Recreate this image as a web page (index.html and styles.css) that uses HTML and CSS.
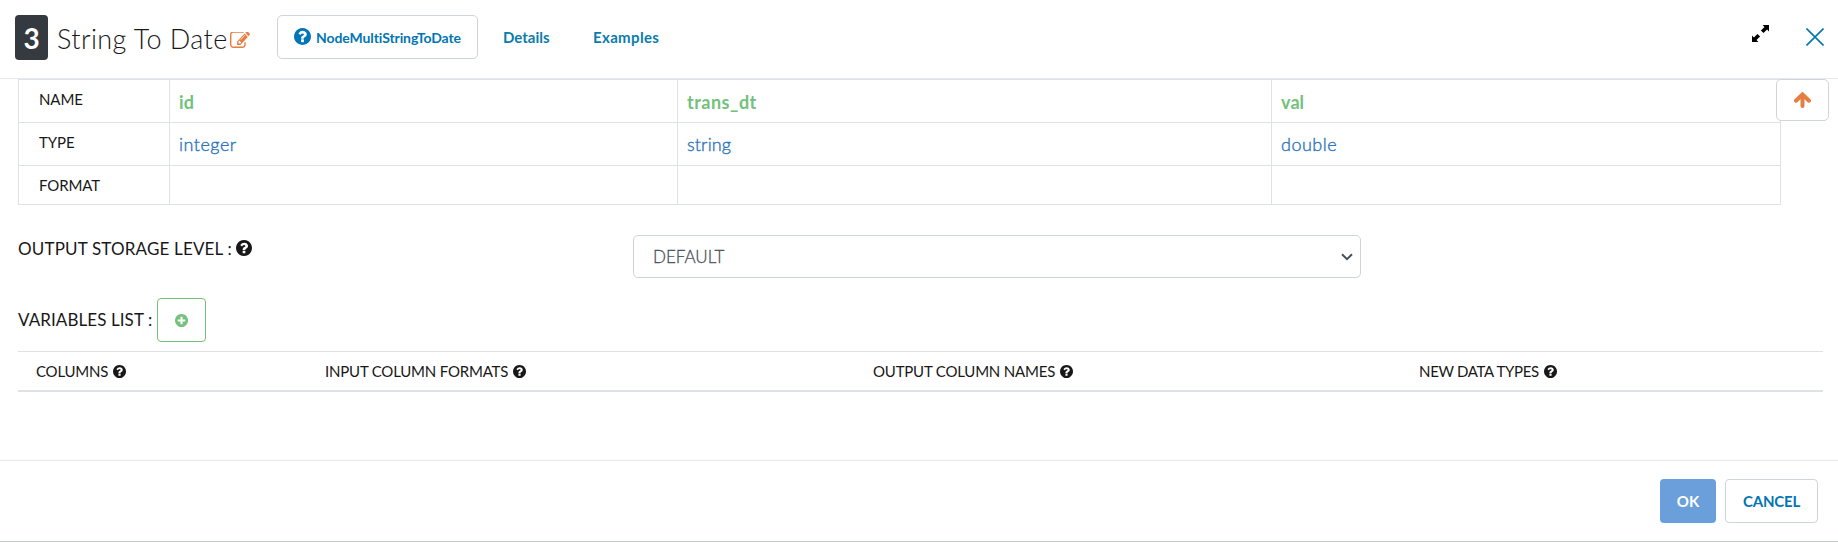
FILE: index.html
```
<!DOCTYPE html>
<html lang="en">
<head>
<meta charset="utf-8">
<title>String To Date</title>
<link rel="stylesheet" href="styles.css">
</head>
<body>
<svg class="defs" width="0" height="0">
  <symbol id="help" viewBox="128 128 1536 1536"><path d="M1024 1376v-192q0-14-9-23t-23-9h-192q-14 0-23 9t-9 23v192q0 14 9 23t23 9h192q14 0 23-9t9-23zm256-672q0-88-55.500-163t-138.500-116-170-41q-243 0-371 213-15 24 8 42l132 100q7 6 19 6 16 0 25-12 53-68 86-92 34-24 86-24 48 0 85.500 26t37.500 59q0 38-20 61t-68 45q-63 28-115.500 86.500t-52.500 125.500v36q0 14 9 23t23 9h192q14 0 23-9t9-23q0-19 21.500-49.500t54.500-49.500q32-18 49-28.500t46-35 44.500-48 28-60.500 12.500-81zm384 192q0 209-103 385.500t-279.500 279.500-385.500 103-385.500-103-279.500-279.500-103-385.500 103-385.500 279.500-279.500 385.500-103 385.500 103 279.500 279.500 103 385.500z"/></symbol>
</svg>
<header class="header">
  <span class="badge">3</span>
  <h1 class="title">String To Date</h1>
  <svg class="edit" viewBox="0 190 1792 1350" preserveAspectRatio="none"><path d="M888 1184l116-116-152-152-116 116v56h96v96h56zm440-720q-16-16-33 1l-350 350q-17 17-1 33t33-1l350-350q17-17 1-33zm80 594v190q0 119-84.500 203.500t-203.500 84.500h-832q-119 0-203.500-84.500t-84.500-203.500v-832q0-119 84.500-203.500t203.500-84.500h832q63 0 117 25 15 7 18 23 3 17-9 29l-49 49q-14 14-32 8-23-6-45-6h-832q-66 0-113 47t-47 113v832q0 66 47 113t113 47h832q66 0 113-47t47-113v-126q0-13 9-22l64-64q15-15 35-7t20 29zm-96-738l288 288-672 672h-288v-288zm444 132l-92 92-288-288 92-92q28-28 68-28t68 28l152 152q28 28 28 68t-28 68z"/></svg>
  <a class="node-btn"><svg class="help-lg"><use href="#help"/></svg><span>NodeMultiStringToDate</span></a>
  <a class="link details">Details</a>
  <a class="link examples">Examples</a>
  <svg class="expand" viewBox="0 0 17 17"><path d="M10.600 0H17v6.400l-1.900-1.900-3.600 3.600-2.600-2.600 3.600-3.600zM6.400 17H0v-6.400l1.900 1.900 3.600-3.600 2.600 2.600-3.600 3.600z"/></svg>
  <svg class="close" viewBox="0 0 18 18"><path d="M.5.500l17 17M17.500.500l-17 17"/></svg>
</header>
<main class="body">
  <div class="schema-wrap">
    <div class="schema">
      <div class="label">NAME</div><div class="col">id</div><div class="col trans">trans_dt</div><div class="col">val</div>
      <div class="label">TYPE</div><div class="kind">integer</div><div class="kind string">string</div><div class="kind">double</div>
      <div class="label">FORMAT</div><div></div><div></div><div></div>
    </div>
    <button class="up"><svg viewBox="0 0 17 16"><path d="M2 8.700L8.500 2.400L15 8.700M8.500 3V14"/></svg></button>
  </div>
  <div class="storage">
    <div class="field-label out"><span>OUTPUT STORAGE LEVEL :</span><svg class="help-md"><use href="#help"/></svg></div>
    <div class="select"><span>DEFAULT</span><svg viewBox="0 0 12 8"><path d="M1 1.200l5 5 5-5"/></svg></div>
  </div>
  <div class="variables">
    <div class="field-label vars">VARIABLES LIST :</div>
    <button class="add"><svg viewBox="128 128 1536 1536"><path d="M1344 960v-128q0-26-19-45t-45-19h-256v-256q0-26-19-45t-45-19h-128q-26 0-45 19t-19 45v256h-256q-26 0-45 19t-19 45v128q0 26 19 45t45 19h256v256q0 26 19 45t45 19h128q26 0 45-19t19-45v-256h256q26 0 45-19t19-45zm320-64q0 209-103 385.500t-279.500 279.500-385.500 103-385.500-103-279.500-279.500-103-385.500 103-385.500 279.500-279.500 385.500-103 385.500 103 279.500 279.500 103 385.500z"/></svg></button>
  </div>
  <div class="grid-head">
    <div class="th"><span>COLUMNS</span><svg class="help-sm"><use href="#help"/></svg></div>
    <div class="th"><span>INPUT COLUMN FORMATS</span><svg class="help-sm"><use href="#help"/></svg></div>
    <div class="th"><span>OUTPUT COLUMN NAMES</span><svg class="help-sm"><use href="#help"/></svg></div>
    <div class="th types"><span>NEW DATA TYPES</span><svg class="help-sm"><use href="#help"/></svg></div>
  </div>
</main>
<footer class="footer">
  <button class="btn ok">OK</button>
  <button class="btn cancel">CANCEL</button>
</footer>
</body>
</html>
```
FILE: styles.css
```
* { box-sizing: border-box; }
body {
  margin: 0;
  height: 542px;
  display: flex;
  flex-direction: column;
  overflow: hidden;
  background: #fff;
  color: #181818;
  font-family: Lato, "Open Sans", sans-serif;
  border-bottom: 1px solid #c6c8ca;
}
.defs { position: absolute; }
svg { display: block; flex: none; fill: currentColor; }
span { white-space: nowrap; }
button { background: #fff; font-family: inherit; padding: 0; }

.header {
  flex: none;
  height: 79px;
  display: flex;
  align-items: flex-start;
  padding-left: 15px;
  border-bottom: 1px solid #e5e8ec;
}
.badge {
  width: 33px;
  height: 45px;
  margin-top: 15px;
  border-radius: 4px;
  background: #343a40;
  color: #fff;
  font-size: 28px;
  font-weight: 700;
  line-height: 46px;
  text-align: center;
}
.title {
  width: 173px;
  margin: 21px 0 0 9px;
  font-size: 27px;
  font-weight: 300;
  line-height: 35px;
  letter-spacing: 0.42px;
  white-space: nowrap;
}
.edit { width: 20px; height: 16px; margin-top: 32px; color: #e67e43; }
.node-btn {
  display: flex;
  width: 201px;
  height: 44px;
  margin: 15px 0 0 27px;
  padding-left: 16px;
  border: 1px solid #ced4da;
  border-radius: 5px;
  color: #0275b4;
  font-size: 14px;
  font-weight: 700;
  line-height: 44px;
  letter-spacing: -0.1px;
}
.help-lg { width: 17px; height: 17px; margin: 12px 5px 0 0; }
.link { color: #0a7cab; font-size: 15px; font-weight: 700; line-height: 20px; margin-top: 27px; }
.details { width: 64px; margin-left: 25px; }
.examples { width: 68px; margin-left: 26px; letter-spacing: 0.35px; }
.expand { width: 17px; height: 17px; margin: 25px 0 0 auto; color: #000; }
.close { width: 18px; height: 18px; margin: 28px 14px 0 37px; stroke: #0078ad; stroke-width: 1.6; }

.body { flex: 1; padding-left: 18px; min-height: 0; }
.schema-wrap { display: flex; position: relative; height: 126px; }
.schema {
  display: grid;
  grid-template-columns: 151px 508px 594px 509px;
  grid-template-rows: 43px 43px 39px;
  width: 1763px;
  border-top: 1px solid #dee2e6;
  border-left: 1px solid #dee2e6;
}
.schema > div {
  border-right: 1px solid #dee2e6;
  border-bottom: 1px solid #dee2e6;
  padding-left: 9px;
}
.schema > .label { padding-left: 20px; font-size: 15px; line-height: 39px; letter-spacing: -0.1px; }
.col { color: #73c17b; font-size: 18px; font-weight: 700; line-height: 44px; letter-spacing: 0.1px; }
.trans { letter-spacing: 0.5px; }
.kind { color: #2f75bd; font-size: 18px; font-weight: 300; line-height: 43px; letter-spacing: 0.5px; -webkit-text-stroke: 0.4px; }
.string { letter-spacing: 0.15px; }
.up {
  position: absolute;
  left: 1758px;
  top: 0;
  width: 53px;
  height: 42px;
  border: 1px solid #ced4da;
  border-radius: 5px;
  color: #e67e43;
}
.up svg { width: 17px; height: 16px; margin: 0 auto; fill: none; stroke: currentColor; stroke-width: 4; stroke-linecap: round; }

.storage { display: flex; padding-top: 30px; height: 93px; }
.field-label { display: flex; font-size: 17px; line-height: 28px; letter-spacing: 0.08px; }
.out { width: 615px; letter-spacing: 0.17px; }
.help-md { width: 16px; height: 16px; margin: 5px 0 0 4px; }
.select {
  display: flex;
  justify-content: space-between;
  width: 728px;
  height: 43px;
  padding: 0 7px 0 19px;
  border: 1px solid #ced4da;
  border-radius: 5px;
  color: #495057;
  font-size: 17px;
  font-weight: 300;
  line-height: 41px;
  -webkit-text-stroke: 0.3px;
}
.select svg { width: 12px; height: 8px; margin-top: 17px; fill: none; stroke: #495057; stroke-width: 2; }
.variables { display: flex; height: 53px; }
.vars { width: 139px; line-height: 44px; }
.add { width: 49px; height: 44px; border: 1px solid #73c17b; border-radius: 4px; color: #73c17b; }
.add svg { width: 13px; height: 13px; margin: 0 auto; }

.grid-head {
  display: grid;
  grid-template-columns: 289px 548px 546px 1fr;
  width: 1805px;
  height: 41px;
  padding-left: 18px;
  border-top: 1px solid #dee2e6;
  border-bottom: 2px solid #dee2e6;
  font-size: 15px;
  line-height: 39px;
  letter-spacing: -0.2px;
}
.th { display: flex; }
.types { letter-spacing: -0.32px; }
.help-sm { width: 13px; height: 13px; margin: 13px 0 0 5px; }

.footer {
  flex: none;
  display: flex;
  justify-content: flex-end;
  gap: 9px;
  height: 81px;
  padding: 18px 20px 0 0;
  border-top: 1px solid #e5e8ec;
}
.btn { height: 44px; border-radius: 4px; font-size: 15px; font-weight: 700; padding-bottom: 1px; }
.ok { width: 56px; border: 0; background: #6a9fdb; color: #fff; }
.cancel { width: 93px; border: 1px solid #ced4da; color: #0275b4; letter-spacing: -0.2px; }
```
